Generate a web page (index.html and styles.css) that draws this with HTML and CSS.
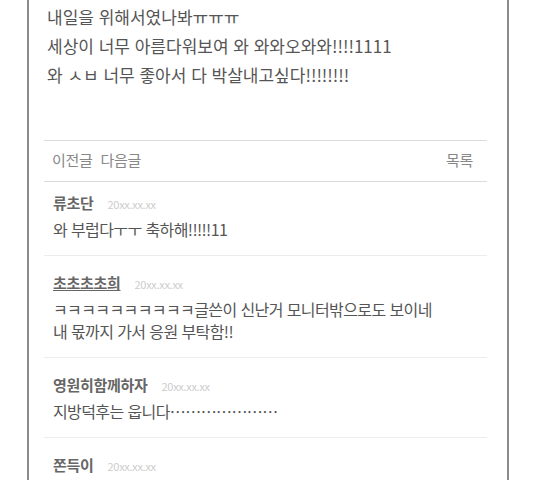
FILE: index.html
```html
<!DOCTYPE html>
<html lang="ko">
<head>
    <meta charset="UTF-8">
    <title>게시글 보기</title>
    <link rel="stylesheet" href="styles.css">
</head>
<body>
    <div class="board">
        <div class="post-body">
            <p>내일을 위해서였나봐ㅠㅠㅠ</p>
            <p>세상이 너무 아름다워보여 와 와와오와와!!!!1111</p>
            <p>와 ㅅㅂ 너무 좋아서 다 박살내고싶다!!!!!!!!</p>
        </div>
        <div class="post-nav">
            <a href="#">이전글</a>
            <a href="#">다음글</a>
            <a href="#" class="list-link">목록</a>
        </div>
        <ul class="comments">
            <li>
                <div class="writer">
                    <strong>류초단</strong>
                    <span class="date">20xx.xx.xx</span>
                </div>
                <p>와 부럽다ㅜㅜ 축하해!!!!!11</p>
            </li>
            <li>
                <div class="writer">
                    <strong class="me">초초초초희</strong>
                    <span class="date">20xx.xx.xx</span>
                </div>
                <p>ㅋㅋㅋㅋㅋㅋㅋㅋㅋㅋ글쓴이 신난거 모니터밖으로도 보이네<br>내 몫까지 가서 응원 부탁함!!</p>
            </li>
            <li>
                <div class="writer">
                    <strong>영원히함께하자</strong>
                    <span class="date">20xx.xx.xx</span>
                </div>
                <p>지방덕후는 웁니다…………………</p>
            </li>
            <li>
                <div class="writer">
                    <strong>쫀득이</strong>
                    <span class="date">20xx.xx.xx</span>
                </div>
            </li>
        </ul>
    </div>
</body>
</html>
```

FILE: styles.css
```css
*{
    margin: 0;
    padding: 0;
}
ul{
    list-style: none;
}
a{
    color: inherit;
    text-decoration: none;
}
body{
    background: #fff;
    font-family: "Noto Sans CJK KR", "Noto Sans", sans-serif;
    color: #555;
}
.board{
    margin: 0 25px 0 27px;
    border: 2px solid #8c8c8c;
    border-top: none;
    height: 700px;
}
.post-body{
    padding: 2px 18px 51px;
    font-size: 17px;
    line-height: 29px;
}
.post-nav{
    display: flex;
    gap: 8px;
    align-items: center;
    box-sizing: border-box;
    height: 42px;
    margin: 0 20px 0 15px;
    padding: 0 8px 3px;
    border-top: 1px solid #dcdcdc;
    border-bottom: 1px solid #dcdcdc;
    font-size: 15px;
    color: #888;
    letter-spacing: -0.3px;
}
.post-nav .list-link{
    margin-left: auto;
    padding-right: 6px;
}
.comments{
    margin: 0 20px 0 15px;
}
.comments li{
    padding: 10px 8px 15px 9px;
    border-bottom: 1px solid #ececec;
}
.comments li + li{
    padding-top: 16px;
}
.writer{
    display: flex;
    align-items: baseline;
    gap: 14px;
    line-height: 22px;
}
.writer strong{
    font-size: 15px;
    color: #666;
    letter-spacing: -0.3px;
}
.writer strong.me{
    text-decoration: underline;
}
.date{
    font-size: 11px;
    color: #ccc;
    letter-spacing: -0.3px;
}
.comments p{
    font-size: 16px;
    line-height: 22px;
    letter-spacing: -0.6px;
    margin-top: 3px;
}
```
